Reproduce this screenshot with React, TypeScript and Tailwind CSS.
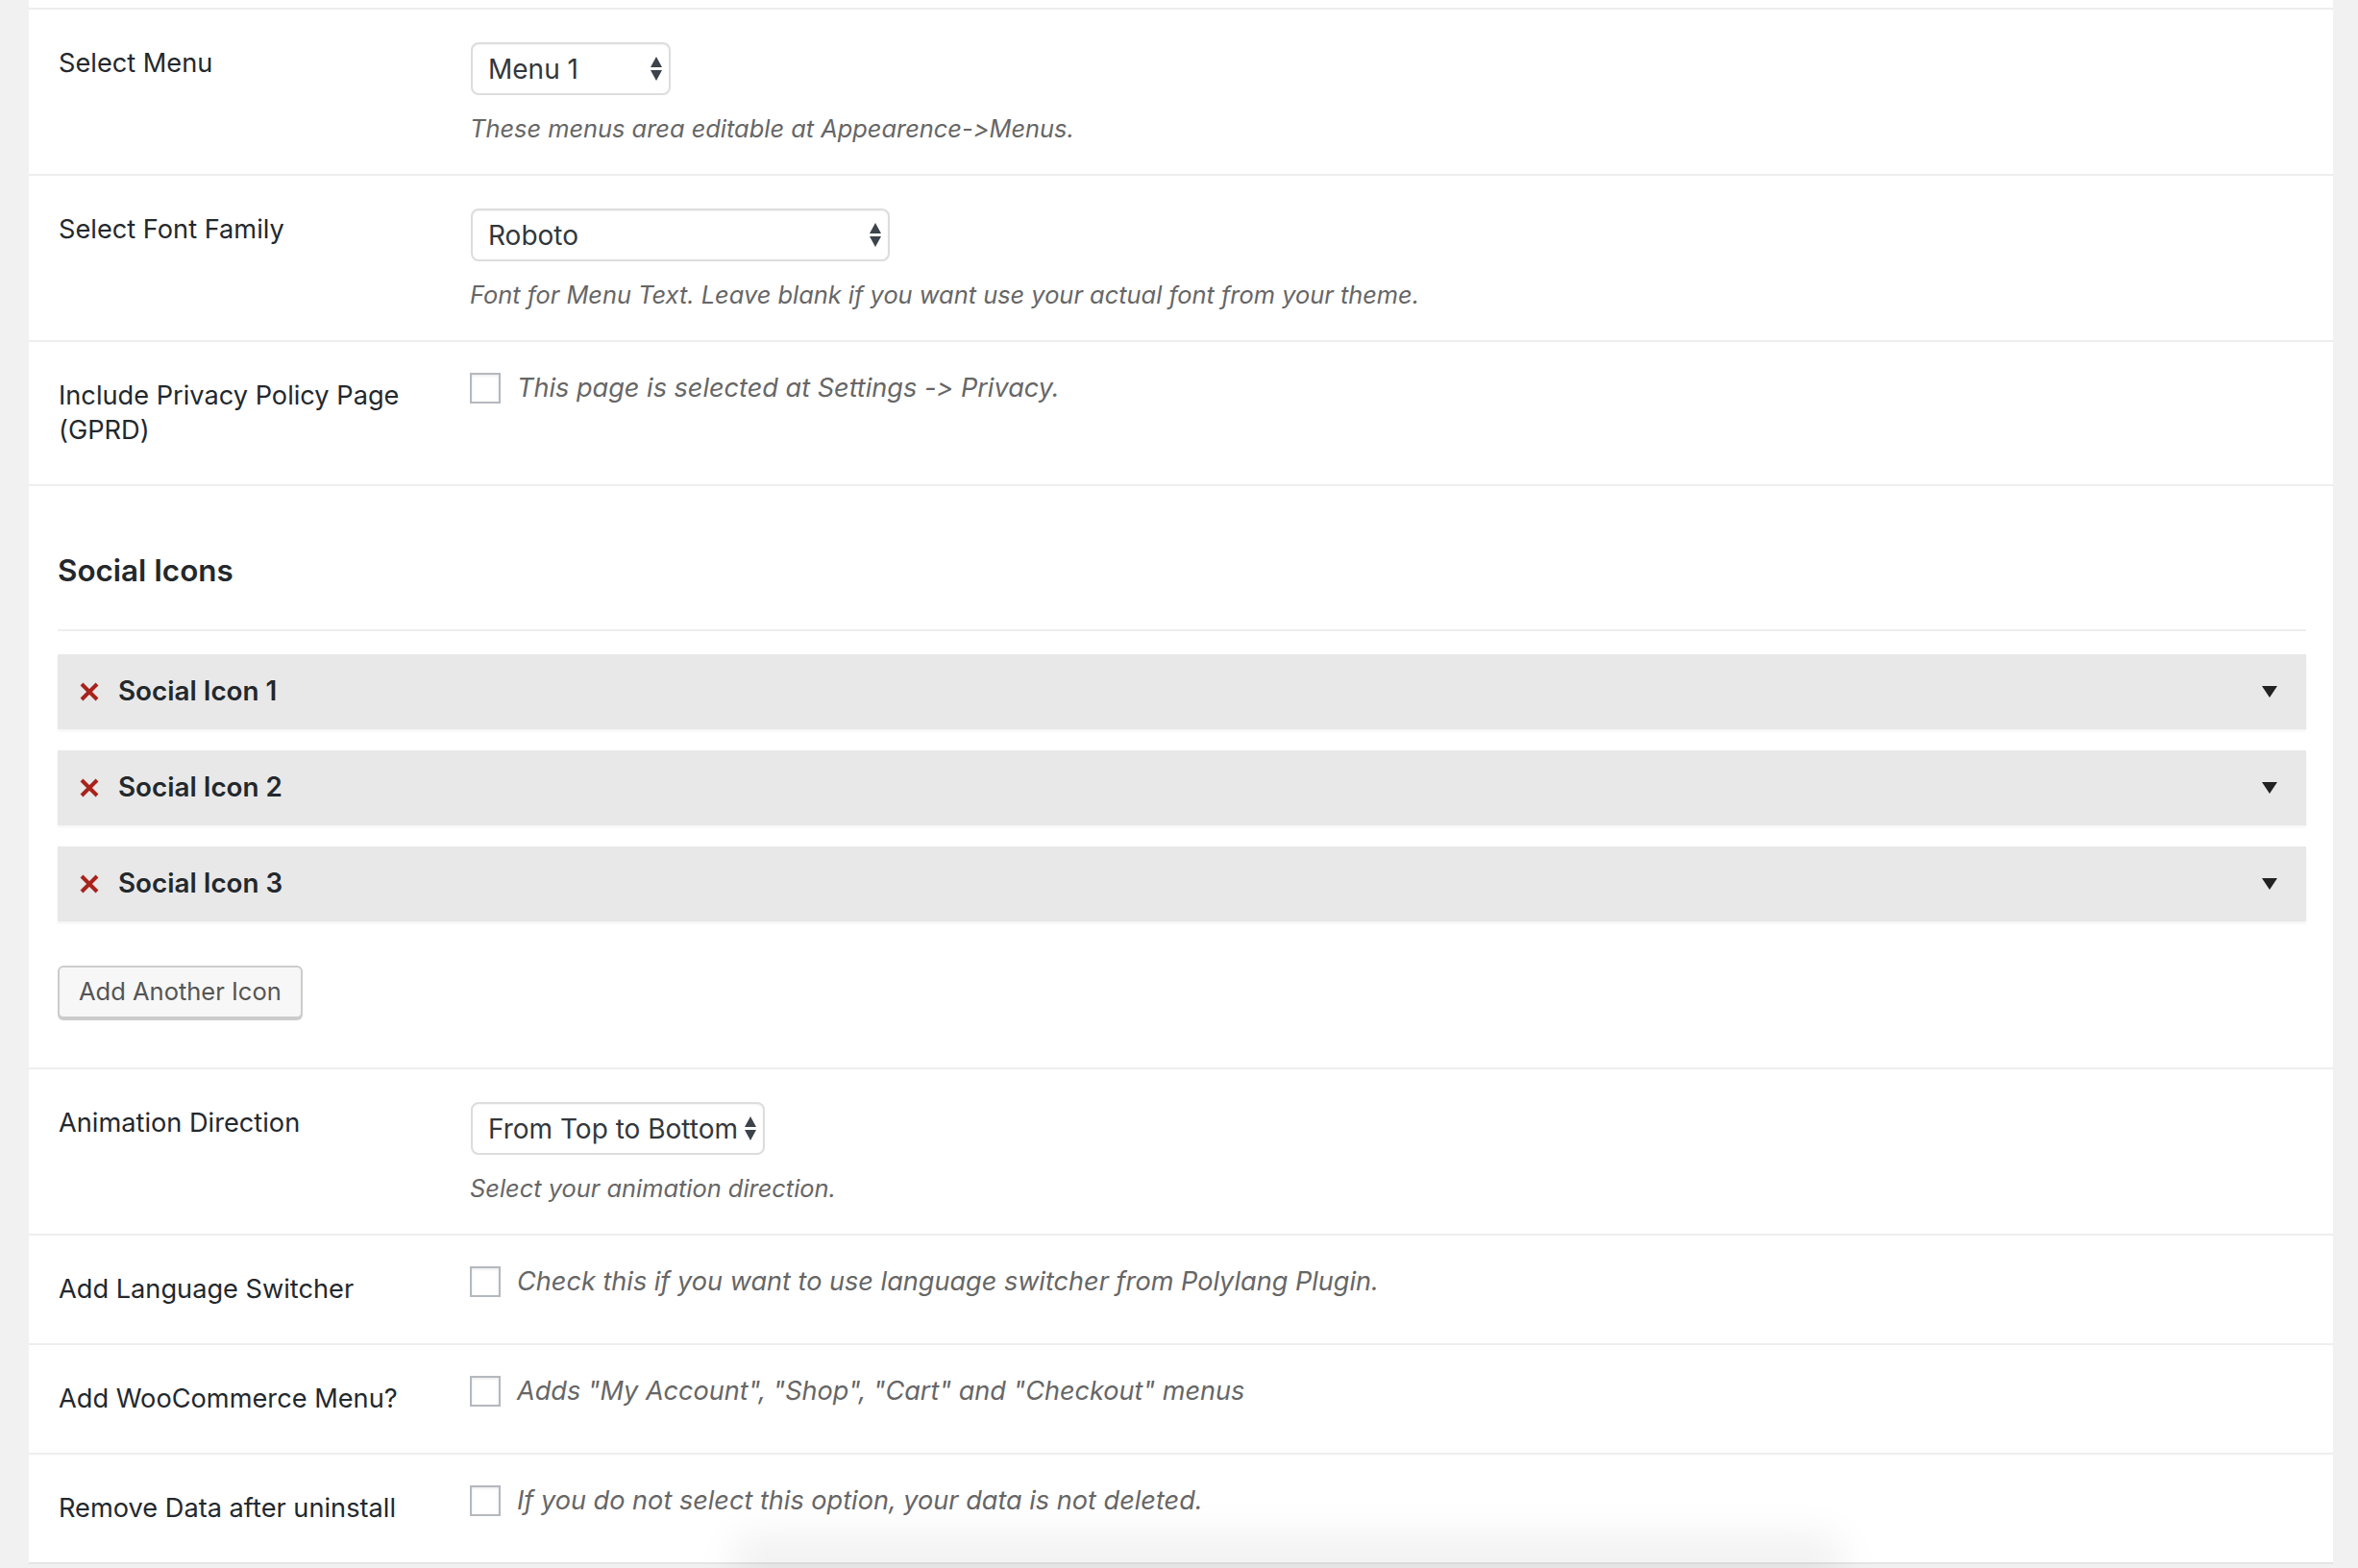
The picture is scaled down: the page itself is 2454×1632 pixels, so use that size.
import React from "react";

function SelectBox({ value, width }: { value: string; width: string }) {
  return (
    <div
      className={`ml-[1px] flex h-[55px] items-center justify-between rounded-[8px] border-2 border-[#dddddd] bg-white pl-[16px] pr-[7px] text-[28px] text-[#32373c] shadow-[inset_0_1px_2px_rgba(0,0,0,0.05)] ${width}`}
    >
      <span className="leading-none">{value}</span>
      <svg width="12" height="25" viewBox="0 0 12 25" className="shrink-0">
        <polygon points="0,11 6,0 12,11" fill="#3c434a" />
        <polygon points="0,14 12,14 6,25" fill="#3c434a" />
      </svg>
    </div>
  );
}

function Label({ children }: { children: React.ReactNode }) {
  return (
    <div className="w-[428px] shrink-0 pt-[38px] pb-[38px]">
      <div className="w-[400px] text-[27.2px] leading-[36px] text-[#23282d]">{children}</div>
    </div>
  );
}

function SelectRow({ label, value, width, desc }: { label: string; value: string; width: string; desc: string }) {
  return (
    <div className="flex border-b-2 border-[#eeeeee] pl-[31px] pr-[28px]">
      <Label>{label}</Label>
      <div className="flex-1 pt-[34px] pb-[30px]">
        <SelectBox value={value} width={width} />
        <p className="mt-[18px] text-[25.4px] leading-[34px] italic text-[#666666]">{desc}</p>
      </div>
    </div>
  );
}

function CheckRow({ label, text, last }: { label: React.ReactNode; text: string; last?: boolean }) {
  return (
    <div className={`flex pl-[31px] pr-[28px] ${last ? "" : "border-b-2 border-[#eeeeee]"}`}>
      <Label>{label}</Label>
      <div className="flex-1 pt-[30px] pb-[30px]">
        <div className="flex items-center">
          <span className="h-[32px] w-[32px] shrink-0 border-2 border-[#b4b9be] bg-white shadow-[inset_0_1px_3px_rgba(0,0,0,0.1)]" />
          <span className="ml-[17px] text-[27.1px] leading-[36px] italic text-[#666666]">{text}</span>
        </div>
      </div>
    </div>
  );
}

function SocialBar({ n }: { n: number }) {
  return (
    <div className="flex h-[78px] items-center justify-between bg-[#e8e8e8] pl-[23px] pr-[30px] shadow-[0_2px_3px_rgba(0,0,0,0.05)]">
      <div className="flex items-center">
        <svg width="20" height="20" viewBox="0 0 20 20" className="shrink-0">
          <path d="M2 2 L18 18 M18 2 L2 18" stroke="#a8231c" strokeWidth="4" strokeLinecap="butt" />
        </svg>
        <span className="ml-[20px] text-[27.8px] font-semibold text-[#23282d]">Social Icon {n}</span>
      </div>
      <svg width="16" height="12" viewBox="0 0 16 12">
        <polygon points="0,0 16,0 8,12" fill="#222222" />
      </svg>
    </div>
  );
}

export default function App() {
  return (
    <div className="relative min-h-screen overflow-hidden bg-[#f1f1f1] pl-[30px] pr-[26px] font-['Inter',sans-serif] [font-variant-ligatures:no-contextual]">
      <div className="bg-white">
        <div className="h-[10px] border-b-2 border-[#eeeeee]" />
        <SelectRow
          label="Select Menu"
          value="Menu 1"
          width="w-[208px]"
          desc="These menus area editable at Appearence->Menus."
        />
        <SelectRow
          label="Select Font Family"
          value="Roboto"
          width="w-[436px]"
          desc="Font for Menu Text. Leave blank if you want use your actual font from your theme."
        />
        <CheckRow label="Include Privacy Policy Page (GPRD)" text="This page is selected at Settings -> Privacy." />

        <div className="border-b-2 border-[#eeeeee] pl-[30px] pr-[28px] pt-[69px] pb-[51px]">
          <h2 className="text-[31.4px] leading-[39px] font-semibold text-[#23282d]">Social Icons</h2>
          <div className="mt-[41px] h-[2px] bg-[#eeeeee]" />
          <div className="mt-[24px] flex flex-col gap-[22px]">
            <SocialBar n={1} />
            <SocialBar n={2} />
            <SocialBar n={3} />
          </div>
          <button className="mt-[46px] h-[55px] rounded-[6px] border-2 border-[#cccccc] bg-[#f7f7f7] px-[20px] text-[25.5px] text-[#555555] shadow-[0_2px_0_#cccccc]">
            Add Another Icon
          </button>
        </div>

        <SelectRow
          label="Animation Direction"
          value="From Top to Bottom"
          width="w-[306px]"
          desc="Select your animation direction."
        />
        <CheckRow label="Add Language Switcher" text="Check this if you want to use language switcher from Polylang Plugin." />
        <CheckRow label="Add WooCommerce Menu?" text={'Adds "My Account", "Shop", "Cart" and "Checkout" menus'} />
        <CheckRow last label="Remove Data after uninstall" text="If you do not select this option, your data is not deleted." />
      </div>
      <div className="h-[2px] bg-[#e5e5e5]" />
      <div className="pointer-events-none absolute left-[760px] top-[1596px] h-[60px] w-[1160px] rounded-full bg-[rgba(0,0,0,0.05)] blur-[18px]" />
    </div>
  );
}
